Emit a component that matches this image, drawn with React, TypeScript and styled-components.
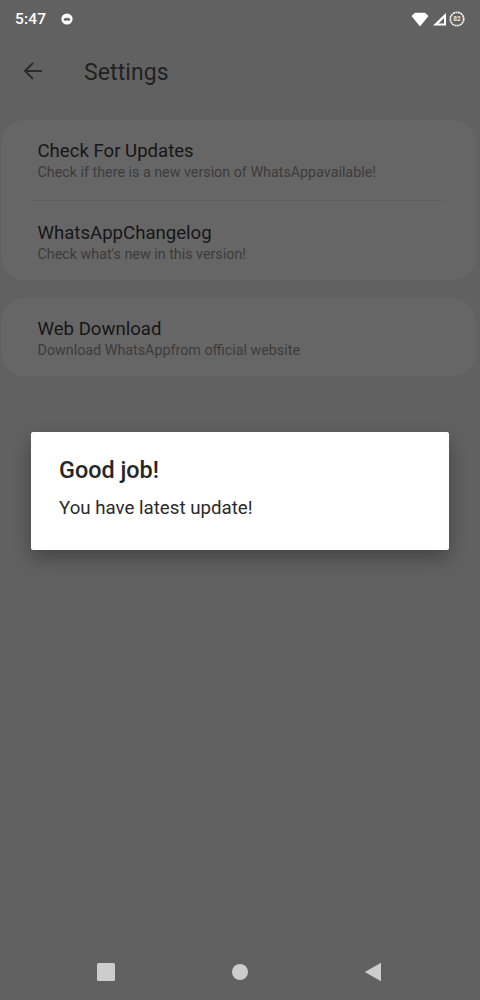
import React from 'react';
import styled, { createGlobalStyle } from 'styled-components';

const GlobalStyle = createGlobalStyle`
  html, body {
    margin: 0;
    padding: 0;
    background: #616161;
  }
  * {
    box-sizing: border-box;
  }
`;

const Screen = styled.div`
  position: relative;
  width: 480px;
  height: 1000px;
  overflow: hidden;
  display: flex;
  flex-direction: column;
  background: #616161;
  font-family: Roboto, 'Liberation Sans', sans-serif;
`;

const StatusBar = styled.div`
  height: 38px;
  padding: 0 15px 0 15px;
  display: flex;
  align-items: center;
  justify-content: space-between;
`;

const StatusGroup = styled.div<{ $gap: number }>`
  display: flex;
  align-items: center;
  gap: ${(p) => p.$gap}px;
`;

const Clock = styled.span`
  color: #fff;
  font-size: 15.5px;
  font-weight: 500;
  letter-spacing: 0.2px;
`;

const AppBar = styled.div`
  height: 66px;
  padding-left: 21px;
  display: flex;
  align-items: center;
  gap: 39px;
`;

const BackButton = styled.svg`
  width: 24px;
  height: 24px;
  display: block;
`;

const Title = styled.h1`
  margin: 2px 0 0;
  color: #222;
  font-size: 23px;
  font-weight: 400;
  letter-spacing: 0.1px;
`;

const Cards = styled.div`
  margin-top: 16px;
  padding: 0 4px 0 1px;
  display: flex;
  flex-direction: column;
  gap: 18px;
`;

const Card = styled.div`
  background: #666666;
  border-radius: 24px;
  padding: 0 31px 0 32px;
`;

const Row = styled.div<{ $divider?: boolean; $top: number; $height: number }>`
  height: ${(p) => p.$height}px;
  padding: ${(p) => p.$top}px 0 0 4.500px;
  border-bottom: ${(p) => (p.$divider ? '1px solid #5f5f5f' : 'none')};
`;

const RowTitle = styled.div`
  color: #161616;
  font-size: 18.600px;
  line-height: 22px;
`;

const RowText = styled.div`
  color: #3c3c3c;
  font-size: 14.300px;
  line-height: 20px;
`;

const DialogLayer = styled.div`
  position: absolute;
  top: 432px;
  left: 31px;
`;

const Dialog = styled.div`
  width: 418px;
  height: 118px;
  padding: 25px 28px 0;
  background: #fff;
  border-radius: 2px;
  box-shadow: 0 8px 20px rgba(0, 0, 0, 0.3);
`;

const DialogTitle = styled.h2`
  margin: 0;
  color: #262626;
  font-size: 23.400px;
  font-weight: 500;
  line-height: 26px;
`;

const DialogText = styled.p`
  margin: 14px 0 0;
  color: #2b2b2b;
  font-size: 18.700px;
  line-height: 22px;
`;

const NavBar = styled.div`
  margin-top: auto;
  height: 38px;
  padding: 0 97px 0 96px;
  display: flex;
  align-items: flex-start;
  justify-content: space-between;
`;

const NavIcon = styled.svg`
  width: 20px;
  height: 20px;
  display: block;
  fill: #cdcdcd;
`;

const BatteryText = styled.text`
  font-family: Roboto, 'Liberation Sans', sans-serif;
  font-size: 6.500px;
  font-weight: 700;
  fill: #e8e8e8;
`;

export default function App() {
  return (
    <>
      <GlobalStyle />
      <Screen>
        <StatusBar>
          <StatusGroup $gap={15}>
            <Clock>5:47</Clock>
            <svg width="12" height="12" viewBox="0 0 12 12">
              <circle cx="6" cy="6" r="5.600" fill="#fff" />
              <path d="M2.600 7.600c.3-2.200 1.500-3.200 3.400-3.200s3.100 1 3.400 3.200z" fill="#555" />
              <circle cx="6" cy="5" r="0.800" fill="#fff" />
            </svg>
          </StatusGroup>
          <StatusGroup $gap={2}>
            <svg width="20" height="15" viewBox="0 0 20 15">
              <path d="M1.500 4 5 .8h10L18.500 4 10 14.500z" fill="#fff" />
            </svg>
            <svg width="15" height="15" viewBox="0 0 15 15">
              <path d="M14 1v12.500H1z M12 6 6.500 11.500H12z" fill="#fff" fillRule="evenodd" />
            </svg>
            <svg width="16" height="16" viewBox="0 0 16 16">
              <circle cx="8" cy="8" r="6.700" fill="none" stroke="#f0f0f0" strokeWidth="1.700" strokeDasharray="2.200 0.500" />
              <BatteryText x="8" y="10.300" textAnchor="middle">82</BatteryText>
            </svg>
          </StatusGroup>
        </StatusBar>

        <AppBar>
          <BackButton viewBox="0 0 24 24" fill="none" stroke="#2a2a2a" strokeWidth="1.900">
            <path d="M21 12H4" />
            <path d="M12 4l-8 8 8 8" />
          </BackButton>
          <Title>Settings</Title>
        </AppBar>

        <Cards>
          <Card>
            <Row $divider $top={20} $height={81}>
              <RowTitle>Check For Updates</RowTitle>
              <RowText>Check if there is a new version of WhatsAppavailable!</RowText>
            </Row>
            <Row $top={21} $height={79}>
              <RowTitle>WhatsAppChangelog</RowTitle>
              <RowText>Check what's new in this version!</RowText>
            </Row>
          </Card>
          <Card>
            <Row $top={20} $height={78}>
              <RowTitle>Web Download</RowTitle>
              <RowText>Download WhatsAppfrom official website</RowText>
            </Row>
          </Card>
        </Cards>

        <NavBar>
          <NavIcon viewBox="0 0 20 20">
            <rect x="1" y="1" width="18" height="18" rx="1.500" />
          </NavIcon>
          <NavIcon viewBox="0 0 20 20">
            <circle cx="10" cy="10" r="8" />
          </NavIcon>
          <NavIcon viewBox="0 0 20 20">
            <path d="M18 .8v18.400L1.800 10z" />
          </NavIcon>
        </NavBar>

        <DialogLayer>
          <Dialog>
            <DialogTitle>Good job!</DialogTitle>
            <DialogText>You have latest update!</DialogText>
          </Dialog>
        </DialogLayer>
      </Screen>
    </>
  );
}
